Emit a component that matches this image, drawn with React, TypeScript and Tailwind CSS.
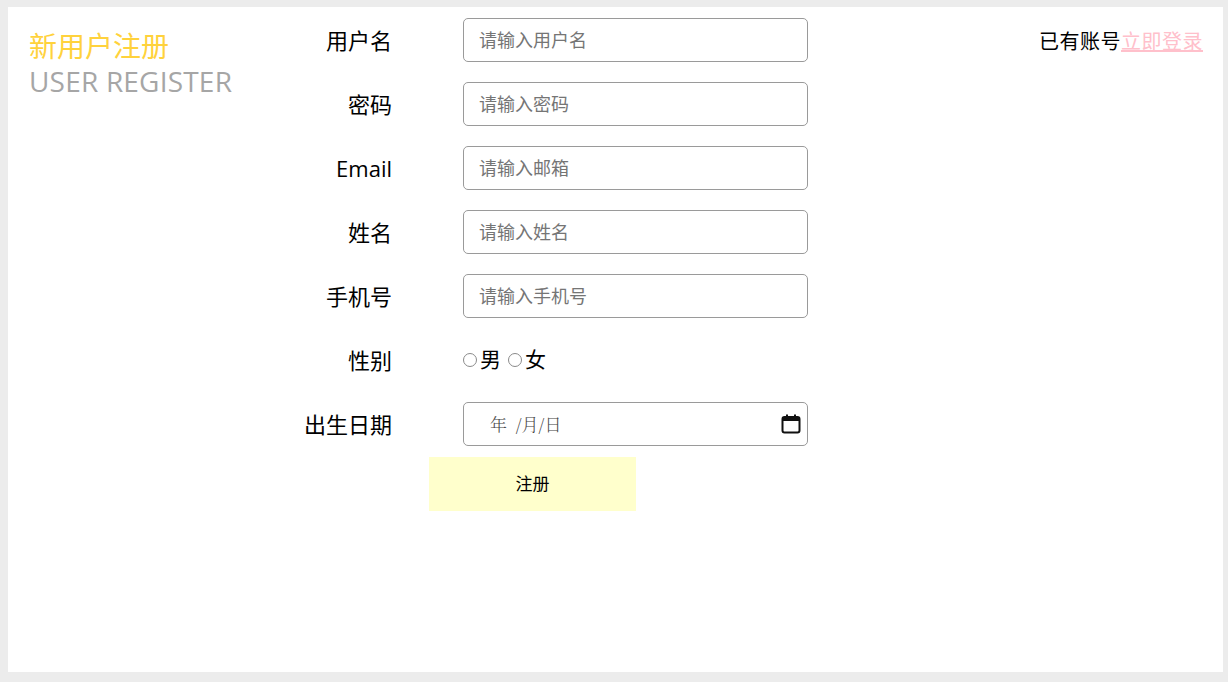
import React, { useState } from 'react';

const fontStack = "font-['Open_Sans','Noto_Sans_CJK_SC',sans-serif]";

interface Field {
  label: string;
  placeholder: string;
  type: string;
}

const fields: Field[] = [
  { label: '用户名', placeholder: '请输入用户名', type: 'text' },
  { label: '密码', placeholder: '请输入密码', type: 'password' },
  { label: 'Email', placeholder: '请输入邮箱', type: 'email' },
  { label: '姓名', placeholder: '请输入姓名', type: 'text' },
  { label: '手机号', placeholder: '请输入手机号', type: 'text' },
];

// Иконка календаря как у нативного date input
const CalendarIcon = () => (
  <svg width="20" height="20" viewBox="0 0 20 20" fill="none">
    <rect x="1.5" y="3" width="17" height="15.5" rx="2" stroke="#111" strokeWidth="2" />
    <rect x="1.5" y="3" width="17" height="4" fill="#111" />
    <rect x="5" y="0.5" width="2" height="3.5" fill="#111" />
    <rect x="13" y="0.5" width="2" height="3.5" fill="#111" />
  </svg>
);

const Row: React.FC<{ label: string; children: React.ReactNode }> = ({ label, children }) => (
  <div className="flex items-center h-[44px]">
    <div className="w-[134px] text-right text-[22px] text-black leading-none">{label}</div>
    <div className="ml-[71px] flex items-center">{children}</div>
  </div>
);

const radioCls =
  'appearance-none shrink-0 w-[14px] h-[14px] rounded-full border border-[#8a8a8a] checked:border-[4px] checked:border-[#0075ff] m-0 mr-[3px]';

const App: React.FC = () => {
  const [gender, setGender] = useState<string>('');

  return (
    <div className={`w-[1228px] h-[682px] bg-[#ececec] pt-[7px] pl-[8px] ${fontStack}`}>
      <div className="w-[1215px] h-[665px] bg-white flex">
        {/* Заголовок слева */}
        <div className="w-[250px] pl-[21px] pt-[22px]">
          <div className="text-[28px] leading-[35px] text-[#ffd23c]">新用户注册</div>
          <div className="text-[28px] leading-[35px] text-[#a6a6a6] tracking-[0.2px]">USER REGISTER</div>
        </div>

        {/* Форма регистрации */}
        <div className="pt-[11px] flex flex-col gap-[20px]">
          {fields.map(f => (
            <Row key={f.label} label={f.label}>
              <input
                type={f.type}
                placeholder={f.placeholder}
                className="w-[345px] h-[44px] border border-[#9a9a9a] rounded-[5px] px-[15px] text-[18px] placeholder:text-[#757575] outline-none"
              />
            </Row>
          ))}

          <Row label="性别">
            <label className="flex items-center text-[21px] text-black">
              <input
                type="radio"
                name="gender"
                checked={gender === 'm'}
                onChange={() => setGender('m')}
                className={radioCls}
              />
              男
            </label>
            <label className="flex items-center text-[21px] text-black ml-[7px]">
              <input
                type="radio"
                name="gender"
                checked={gender === 'f'}
                onChange={() => setGender('f')}
                className={radioCls}
              />
              女
            </label>
          </Row>

          <div className="flex flex-col">
            <Row label="出生日期">
              <div className="w-[345px] h-[44px] border border-[#9a9a9a] rounded-[5px] flex items-center justify-between pl-[26px] pr-[6px]">
                <span className="text-[17px] text-[#444] font-['Noto_Serif_CJK_SC','Noto_Sans_CJK_SC',serif] font-light">
                  年&nbsp;&nbsp;/月/日
                </span>
                <CalendarIcon />
              </div>
            </Row>
            <button className="mt-[11px] ml-[171px] w-[207px] h-[54px] bg-[#ffffcc] text-[17px] text-black">
              注册
            </button>
          </div>
        </div>

        {/* Ссылка на вход справа */}
        <div className="ml-auto pr-[20px] pt-[22px] text-[20px] leading-[26px] h-fit whitespace-nowrap tracking-[0.5px]">
          <span className="text-black">已有账号</span>
          <a href="#" className="text-[#ffc0cb] underline">立即登录</a>
        </div>
      </div>
    </div>
  );
};

export default App;
